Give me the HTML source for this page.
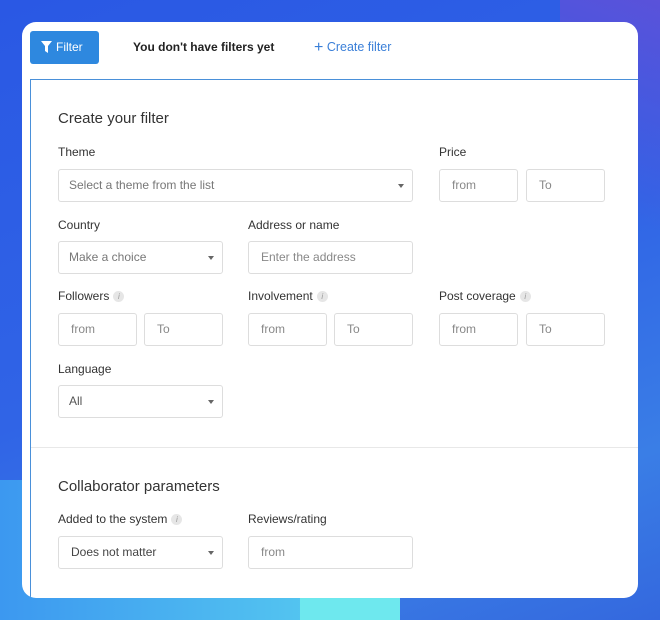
<!DOCTYPE html>
<html><head><style>
*{box-sizing:border-box;margin:0;padding:0}
body{width:660px;height:620px;overflow:hidden;position:relative;font-family:"Liberation Sans",sans-serif;
background:linear-gradient(160deg,#2a58e4 0%,#3064e6 50%,#3a7ee6 80%,#3468de 100%);}
.bl{position:absolute;left:0;top:480px;width:330px;height:140px;background:linear-gradient(90deg,#3c98f0,#55c8f0);}
.bc{position:absolute;left:300px;top:580px;width:100px;height:40px;background:#6ee8ee;}
.br{position:absolute;left:560px;top:0;width:100px;height:300px;background:linear-gradient(200deg,#5a52da,rgba(48,100,230,0) 70%);}
.card{position:absolute;left:22px;top:22px;width:616px;height:576px;background:#fff;border-radius:14px;overflow:hidden;}
.btn{position:absolute;left:8px;top:9px;width:69px;height:33px;background:#2e88df;border-radius:3px;color:#fff;font-size:12px;line-height:33px;padding-left:26px}
.btn svg{position:absolute;left:11px;top:10px}
.t1{position:absolute;left:111px;top:18px;font-size:12px;font-weight:bold;color:#222}
.t2{position:absolute;left:292px;top:17px;font-size:12.5px;color:#3a7fd8}
.panel{position:absolute;left:8px;top:57px;width:620px;height:540px;border-top:1px solid #4a90d9;border-left:1px solid #4a90d9;}
.h{position:absolute;font-size:15px;color:#333}
.l{position:absolute;font-size:12px;color:#333}
.in{position:absolute;height:33px;border:1px solid #ddd;border-radius:3px;font-size:12px;color:#888;line-height:31px;padding-left:12px;background:#fff}
.sel{color:#777;padding-left:10px}
.sel:after{content:"";position:absolute;right:8px;top:14px;border:3px solid transparent;border-top:4px solid #666}
.i{display:inline-block;width:11px;height:11px;border-radius:50%;background:#e6e6e6;color:#999;font-size:8px;line-height:11px;text-align:center;font-style:italic;vertical-align:middle;margin-left:4px}
.div{position:absolute;left:0;top:367px;width:610px;border-top:1px solid #e8e8e8}
</style></head><body>
<div class="bl"></div><div class="bc"></div><div class="br"></div>
<div class="card">
<div class="btn"><svg width="11" height="12" viewBox="0 0 11 12"><path d="M0 0H11L7 5V12L4 10V5Z" fill="#fff"/></svg>Filter</div>
<div class="t1">You don't have filters yet</div>
<div class="t2"><span style="font-size:16px;vertical-align:-1px">+</span> Create filter</div>
<div class="panel">
<div class="h" style="left:27px;top:30px">Create your filter</div>
<div class="l" style="left:27px;top:65px">Theme</div>
<div class="l" style="left:408px;top:65px">Price</div>
<div class="in sel" style="left:27px;top:89px;width:355px">Select a theme from the list</div>
<div class="in" style="left:408px;top:89px;width:79px">from</div>
<div class="in" style="left:495px;top:89px;width:79px">To</div>
<div class="l" style="left:27px;top:138px">Country</div>
<div class="l" style="left:217px;top:138px">Address or name</div>
<div class="in sel" style="left:27px;top:161px;width:165px">Make a choice</div>
<div class="in" style="left:217px;top:161px;width:165px">Enter the address</div>
<div class="l" style="left:27px;top:209px">Followers<span class="i">i</span></div>
<div class="l" style="left:217px;top:209px">Involvement<span class="i">i</span></div>
<div class="l" style="left:408px;top:209px">Post coverage<span class="i">i</span></div>
<div class="in" style="left:27px;top:233px;width:79px">from</div>
<div class="in" style="left:113px;top:233px;width:79px">To</div>
<div class="in" style="left:217px;top:233px;width:79px">from</div>
<div class="in" style="left:303px;top:233px;width:79px">To</div>
<div class="in" style="left:408px;top:233px;width:79px">from</div>
<div class="in" style="left:495px;top:233px;width:79px">To</div>
<div class="l" style="left:27px;top:282px">Language</div>
<div class="in sel" style="left:27px;top:305px;width:165px;color:#555">All</div>
<div class="div"></div>
<div class="h" style="left:27px;top:398px">Collaborator parameters</div>
<div class="l" style="left:27px;top:432px">Added to the system<span class="i">i</span></div>
<div class="l" style="left:217px;top:432px">Reviews/rating</div>
<div class="in sel" style="left:27px;top:456px;width:165px;color:#444;padding-left:12px">Does not matter</div>
<div class="in" style="left:217px;top:456px;width:165px">from</div>
</div>
</div>
</body></html>
